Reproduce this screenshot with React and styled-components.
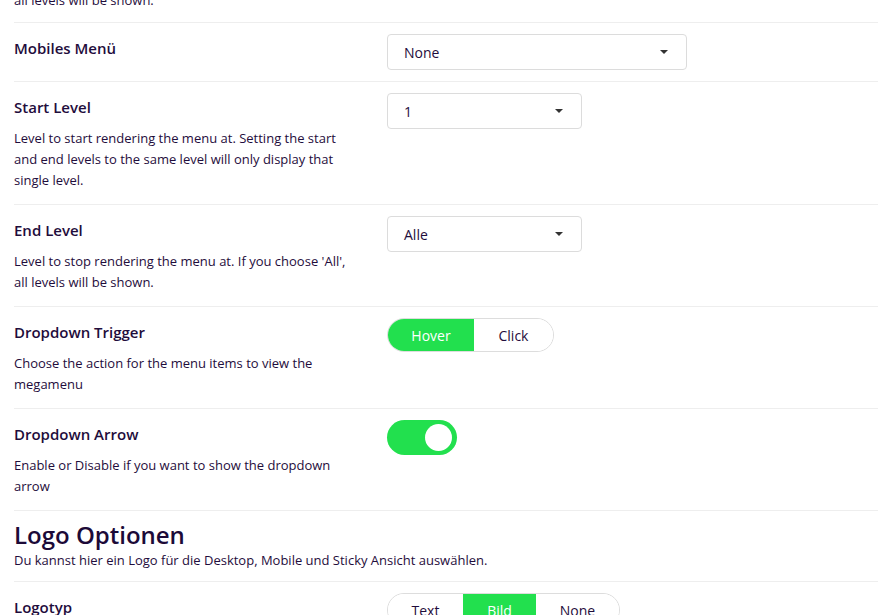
import styled, { createGlobalStyle } from 'styled-components';
import { useState } from 'react';

// globale Grundwerte
const GlobalStyle = createGlobalStyle`
  html, body {
    margin: 0;
    padding: 0;
    background: #ffffff;
  }
  body {
    font-family: "Open Sans", Lato, sans-serif;
    color: #1f0d3c;
  }
`;

export default function App() {
  // Auswahl der Segment-Buttons
  const [trigger, setTrigger] = useState('hover');
  const [logoType, setLogoType] = useState('bild');
  const [arrow, setArrow] = useState(true);

  return (
    <>
      <GlobalStyle />
      <StPage>
        <StRow>
          <StLabelCol>
            <StDesc>all levels will be shown.</StDesc>
          </StLabelCol>
        </StRow>

        <StRow>
          <StLabelCol>
            <StTitle>Mobiles Menü</StTitle>
          </StLabelCol>
          <StControlCol>
            <StSelect $width={300}>
              None
              <StCaret />
            </StSelect>
          </StControlCol>
        </StRow>

        <StRow>
          <StLabelCol>
            <StTitle>Start Level</StTitle>
            <StDesc>
              Level to start rendering the menu at. Setting the start and end levels to the same level
              will only display that single level.
            </StDesc>
          </StLabelCol>
          <StControlCol>
            <StSelect $width={195}>
              1
              <StCaret />
            </StSelect>
          </StControlCol>
        </StRow>

        <StRow>
          <StLabelCol>
            <StTitle>End Level</StTitle>
            <StDesc>
              Level to stop rendering the menu at. If you choose 'All', all levels will be shown.
            </StDesc>
          </StLabelCol>
          <StControlCol>
            <StSelect $width={195}>
              Alle
              <StCaret />
            </StSelect>
          </StControlCol>
        </StRow>

        <StRow>
          <StLabelCol>
            <StTitle>Dropdown Trigger</StTitle>
            <StDesc>Choose the action for the menu items to view the megamenu</StDesc>
          </StLabelCol>
          <StControlCol>
            <StSegment>
              <StSegButton $active={trigger === 'hover'} $w={86} onClick={() => setTrigger('hover')}>
                Hover
              </StSegButton>
              <StSegButton $active={trigger === 'click'} $w={79} onClick={() => setTrigger('click')}>
                Click
              </StSegButton>
            </StSegment>
          </StControlCol>
        </StRow>

        <StRow>
          <StLabelCol>
            <StTitle>Dropdown Arrow</StTitle>
            <StDesc>Enable or Disable if you want to show the dropdown arrow</StDesc>
          </StLabelCol>
          <StControlCol>
            <StToggle $on={arrow} onClick={() => setArrow(!arrow)}>
              <StKnob $on={arrow} />
            </StToggle>
          </StControlCol>
        </StRow>

        <StSection>
          <StHeading>Logo Optionen</StHeading>
          <StDesc>Du kannst hier ein Logo für die Desktop, Mobile und Sticky Ansicht auswählen.</StDesc>
        </StSection>

        <StRow>
          <StLabelCol>
            <StTitle>Logotyp</StTitle>
          </StLabelCol>
          <StControlCol>
            <StSegment>
              <StSegButton $active={logoType === 'text'} $w={75} onClick={() => setLogoType('text')}>
                Text
              </StSegButton>
              <StSegButton $active={logoType === 'bild'} $w={73} onClick={() => setLogoType('bild')}>
                Bild
              </StSegButton>
              <StSegButton $active={logoType === 'none'} $w={83} onClick={() => setLogoType('none')}>
                None
              </StSegButton>
            </StSegment>
          </StControlCol>
        </StRow>
      </StPage>
    </>
  );
}

const StPage = styled.div`
  width: 864px;
  margin: -21px 0 0 14px;
  display: flex;
  flex-direction: column;
`;

const StRow = styled.div`
  display: grid;
  grid-template-columns: 373px 1fr;
  padding: 11px 0;
  border-bottom: 1px solid #eeeeee;
`;

const StLabelCol = styled.div`
  display: flex;
  flex-direction: column;
  max-width: 345px;
`;

const StControlCol = styled.div`
  display: flex;
  align-items: flex-start;
`;

const StTitle = styled.div`
  font-size: 15px;
  font-weight: 600;
  line-height: 20px;
  margin-top: 4px;
  color: #1f0d3c;
`;

const StDesc = styled.div`
  font-size: 13px;
  line-height: 21px;
  color: #1f0d3c;
  ${StTitle} + & {
    margin: 11px 0 2px;
  }
`;

const StSelect = styled.div`
  width: ${(p) => p.$width}px;
  height: 36px;
  box-sizing: border-box;
  border: 1px solid #dcdcdc;
  border-radius: 4px;
  padding: 0 16px;
  display: flex;
  align-items: center;
  justify-content: space-between;
  font-size: 14px;
  color: #1f0d3c;
  background: #fff;
`;

const StCaret = styled.span`
  width: 0;
  height: 0;
  border-left: 4px solid transparent;
  border-right: 4px solid transparent;
  border-top: 4px solid #333;
  margin-right: 2px;
`;

const StSegment = styled.div`
  display: flex;
  height: 34px;
  box-sizing: border-box;
  border: 1px solid #dddddd;
  border-radius: 17px;
  overflow: hidden;
`;

const StSegButton = styled.div`
  width: ${(p) => p.$w}px;
  display: flex;
  align-items: center;
  justify-content: center;
  font-size: 14px;
  cursor: pointer;
  background: ${(p) => (p.$active ? '#22e04e' : '#ffffff')};
  color: ${(p) => (p.$active ? '#ffffff' : '#1f0d3c')};
`;

const StToggle = styled.div`
  width: 70px;
  height: 35px;
  border-radius: 18px;
  background: ${(p) => (p.$on ? '#22e04e' : '#dddddd')};
  display: flex;
  align-items: center;
  justify-content: ${(p) => (p.$on ? 'flex-end' : 'flex-start')};
  padding: 0 5px;
  box-sizing: border-box;
  cursor: pointer;
`;

const StKnob = styled.div`
  width: 27px;
  height: 27px;
  border-radius: 50%;
  background: #ffffff;
`;

const StSection = styled.div`
  padding: 9px 0 10px;
  border-bottom: 1px solid #eeeeee;
`;

const StHeading = styled.div`
  font-size: 24px;
  font-weight: 600;
  line-height: 30px;
  color: #1c0a38;
`;
